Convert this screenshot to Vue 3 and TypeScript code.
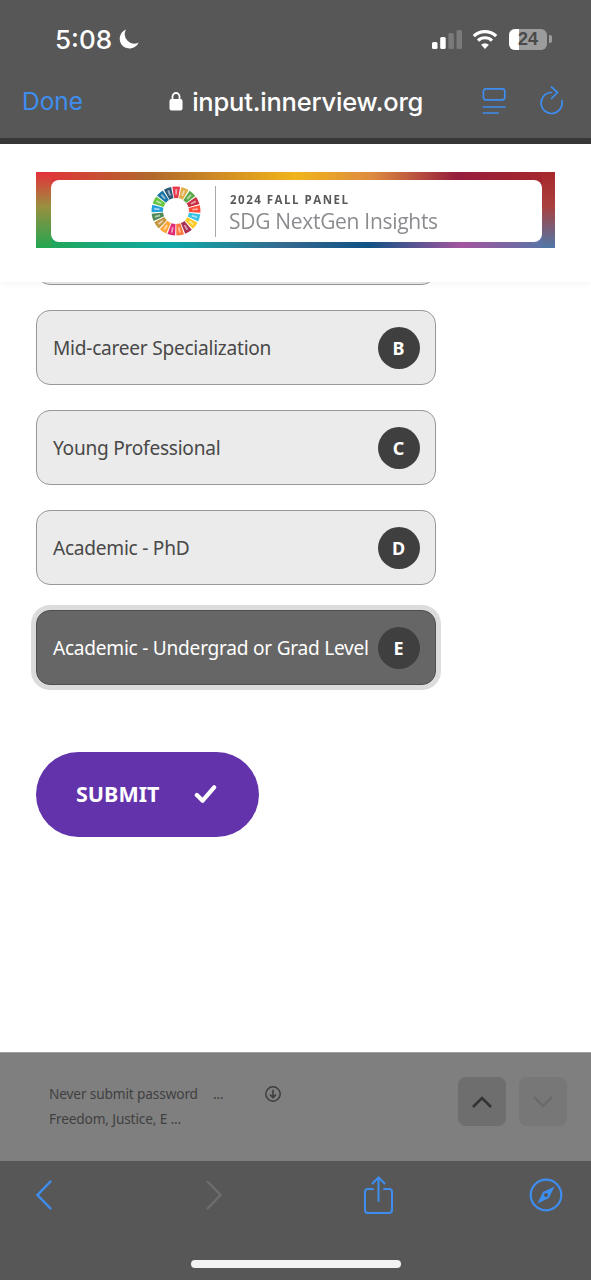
<script setup lang="ts">
const options = [
  { label: 'Mid-career Specialization', key: 'B', selected: false },
  { label: 'Young Professional', key: 'C', selected: false },
  { label: 'Academic - PhD', key: 'D', selected: false },
  { label: 'Academic - Undergrad or Grad Level', key: 'E', selected: true },
]
const sdgColors = ['#e5243b','#dda63a','#4c9f38','#c5192d','#ff3a21','#26bde2','#fcc30b','#a21942','#fd6925','#dd1367','#fd9d24','#bf8b2e','#3f7e44','#0a97d9','#56c02b','#00689d','#19486a']
const wedges = sdgColors.map((fill, i) => {
  const a0 = ((i * 360) / 17 - 10 - 90 + 1.5) * (Math.PI / 180)
  const a1 = (((i + 1) * 360) / 17 - 10 - 90 - 1.5) * (Math.PI / 180)
  const mid = (a0 + a1) / 2
  const pt = (r: number, a: number) => `${(25 + r * Math.cos(a)).toFixed(2)} ${(25 + r * Math.sin(a)).toFixed(2)}`
  const d = `M${pt(13, a0)} L${pt(24.5, a0)} A24.5 24.5 0 0 1 ${pt(24.5, a1)} L${pt(13, a1)} A13 13 0 0 0 ${pt(13, a0)}Z`
  const mark = `M${pt(16.5, mid)} L${pt(22, mid)}`
  return { fill, d, mark }
})
</script>

<template>
  <div class="phone">
    <header class="browser-top">
      <div class="status">
        <div class="status-left">
          <span class="time">5:08</span>
          <svg class="moon" viewBox="0 0 20 20"><path d="M7 .6A9.800 9.800 0 1 0 19.600 13.400 9.400 9.400 0 0 1 7 .6Z" fill="#fff"/></svg>
        </div>
        <div class="status-right">
          <svg class="signal" viewBox="0 0 30 19">
            <rect x="0" y="12" width="5.500" height="7" rx="1.500" fill="#fff"/>
            <rect x="8.200" y="7" width="5.500" height="12" rx="1.500" fill="#fff"/>
            <rect x="16.400" y="3" width="5.500" height="16" rx="1.500" fill="#7a7a7a"/>
            <rect x="24.500" y="0" width="5.500" height="19" rx="1.500" fill="#7a7a7a"/>
          </svg>
          <svg class="wifi" viewBox="0 0 26 20" fill="none" stroke="#fff" stroke-width="3.200">
            <path d="M1.800 7.200a16 16 0 0 1 22.400 0"/>
            <path d="M6 11.600a10 10 0 0 1 14 0"/>
            <path d="M13 20l-3.900-4.200a5.600 5.600 0 0 1 7.800 0Z" fill="#fff" stroke="none"/>
          </svg>
          <div class="battery"><span class="battery-fill"></span><span class="battery-num">24</span></div>
          <span class="battery-cap"></span>
        </div>
      </div>
      <div class="navbar">
        <span class="done">Done</span>
        <div class="address">
          <svg class="lock" viewBox="0 0 14 20"><path d="M3.500 9V5.500a3.500 3.500 0 0 1 7 0V9" fill="none" stroke="#fff" stroke-width="1.800"/><rect x="0.500" y="8" width="13" height="11.500" rx="2" fill="#fff"/></svg>
          <span class="url">input.innerview.org</span>
        </div>
        <div class="nav-icons">
          <svg class="reader" viewBox="0 0 24 28" fill="none" stroke="#3e8ef0" stroke-width="1.700">
            <rect x="1.400" y="1.800" width="21.400" height="11" rx="2.500"/>
            <path d="M.8 20h22.800M.8 26h16"/>
          </svg>
          <svg class="reload" viewBox="0 0 24 30" fill="none" stroke="#3e8ef0" stroke-width="1.700" stroke-linecap="round" stroke-linejoin="round">
            <path d="M11.500 6.500A10.500 10.500 0 1 0 21.800 14.500"/>
            <path d="M11.500 1l6 5.500-6 6"/>
          </svg>
        </div>
      </div>
    </header>
    <div class="edge"></div>

    <section class="page">
      <div class="brand">
        <div class="banner">
          <div class="banner-inner">
            <svg class="wheel" viewBox="0 0 50 50">
              <g v-for="w in wedges" :key="w.fill + w.d">
                <path :d="w.d" :fill="w.fill"/>
                <path :d="w.mark" stroke="#fff" stroke-opacity="0.55" stroke-width="1.800" fill="none"/>
              </g>
            </svg>
            <span class="divider"></span>
            <div class="brand-text">
              <span class="panel">2024 FALL PANEL</span>
              <span class="insights">SDG NextGen Insights</span>
            </div>
          </div>
        </div>
      </div>
      <main class="content">
        <div class="options">
          <div class="option sliver"></div>
          <div v-for="o in options" :key="o.key" class="option" :class="{ selected: o.selected }">
            <span class="option-label">{{ o.label }}</span>
            <span class="badge">{{ o.key }}</span>
          </div>
          <button class="submit" type="button">
            <span>SUBMIT</span>
            <svg class="check" viewBox="0 0 24 20" fill="none" stroke="#fff" stroke-width="4.400" stroke-linecap="round" stroke-linejoin="round"><path d="M3 11l6 6L21 3"/></svg>
          </button>
        </div>
      </main>
    </section>

    <section class="survey-bar">
      <div class="survey-text">
        <div class="line one">
          <span class="pw">Never submit password</span>
          <span class="dots">...</span>
          <svg class="down-circle" viewBox="0 0 18 18" fill="none" stroke="#3d3d3d" stroke-width="1.500"><circle cx="9" cy="9" r="7.200"/><path d="M9 4.800v7.600M6 9.600l3 3 3-3"/></svg>
        </div>
        <div class="line">Freedom, Justice, E ...</div>
      </div>
      <div class="arrows">
        <span class="arrow active"><svg viewBox="0 0 24 14" fill="none" stroke="#333" stroke-width="2.600"><path d="M3 12l9-9 9 9"/></svg></span>
        <span class="arrow"><svg viewBox="0 0 24 14" fill="none" stroke="#6b6b6b" stroke-width="2.600"><path d="M3 2l9 9 9-9"/></svg></span>
      </div>
    </section>

    <footer class="toolbar">
      <div class="tools">
        <svg class="chev" viewBox="0 0 16 30" fill="none" stroke="#3e8ef0" stroke-width="2.400" stroke-linecap="round"><path d="M14.500 1.500L1.500 15l13 13.500"/></svg>
        <svg class="chev forward" viewBox="0 0 16 30" fill="none" stroke="#6d6d6d" stroke-width="2.400" stroke-linecap="round"><path d="M1.500 1.500l13 13.500-13 13.500"/></svg>
        <svg class="share" viewBox="0 0 30 38" fill="none" stroke="#3e8ef0" stroke-width="2" stroke-linecap="round"><path d="M9 13H4a3 3 0 0 0-3 3v18a3 3 0 0 0 3 3h21a3 3 0 0 0 3-3V16a3 3 0 0 0-3-3h-5"/><path d="M14.500 25V2M8.500 7.500l6-6 6 6"/></svg>
        <svg class="compass" viewBox="0 0 34 34"><circle cx="17" cy="17" r="15.300" fill="none" stroke="#3e8ef0" stroke-width="2.200"/><path d="M25.500 8.500L20 20l-11.500 5.500L14 14Z" fill="#3e8ef0"/><circle cx="17" cy="17" r="2" fill="#575757"/></svg>
      </div>
      <div class="home-bar"></div>
    </footer>
  </div>
</template>

<style scoped>
.phone {
  width: 591px;
  height: 1280px;
  display: flex;
  flex-direction: column;
  background: #fff;
  overflow: hidden;
  font-family: "Inter", "Liberation Sans", sans-serif;
}
.browser-top {
  height: 138px;
  flex: none;
  background: #575757;
  padding: 0 22px;
  box-sizing: border-box;
}
.edge { height: 6px; flex: none; background: #383838; }
.status {
  height: 78px;
  display: flex;
  align-items: center;
  justify-content: space-between;
}
.status-left { display: flex; align-items: center; gap: 7px; margin-left: 33px; }
.time { color: #fff; font-size: 26px; font-weight: 500; letter-spacing: 0; }
.moon { width: 20px; height: 20px; }
.status-right { display: flex; align-items: center; margin-right: 17px; }
.signal { width: 30px; height: 19px; margin-right: 10px; }
.wifi { width: 26px; height: 20px; margin-right: 11px; }
.battery {
  position: relative;
  width: 38px;
  height: 21px;
  border-radius: 6px;
  background: #9c9c9c;
  overflow: hidden;
  display: flex;
  align-items: center;
  justify-content: center;
}
.battery-fill { position: absolute; left: 0; top: 0; bottom: 0; width: 10px; background: #fff; }
.battery-num { position: relative; color: #4a4a4a; font-size: 18px; font-weight: 700; font-family: "Liberation Sans", sans-serif; }
.battery-cap { width: 3px; height: 8px; margin-left: 2px; background: #9c9c9c; border-radius: 0 2px 2px 0; }
.navbar { height: 46px; display: flex; align-items: center; position: relative; justify-content: space-between; }
.done { color: #3e8ef0; font-size: 24.500px; }
.address { display: flex; align-items: center; gap: 9px; margin-left: 86px; }
.lock { width: 14px; height: 20px; }
.url { color: #fff; font-size: 25.500px; font-weight: 500; letter-spacing: -0.2px; }
.nav-icons { display: flex; align-items: center; gap: 34px; margin-left: auto; margin-right: 5px; }
.reader { width: 24px; height: 28px; }
.reload { width: 24px; height: 30px; }

.page { flex: 1; display: flex; flex-direction: column; min-height: 0; }
.brand {
  height: 138px;
  flex: none;
  box-sizing: border-box;
  padding: 28px 36px 0;
  background: #fff;
  position: relative;
  z-index: 2;
  box-shadow: 0 1px 6px rgba(0, 0, 0, 0.06);
}
.banner {
  height: 76px;
  box-sizing: border-box;
  padding: 8px 13px 6px 15px;
  background:
    linear-gradient(to bottom, #e6303a, #9a8f3f 45%, #22a650) left top / 15px 100% no-repeat,
    linear-gradient(to bottom, #a8282c, #a9403f 45%, #4f78a8) right top / 13px 100% no-repeat,
    linear-gradient(to right, #e6303a, #b0682c 22%, #f0b41a 50%, #dd8a40 65%, #961d3c 81%, #a8282c) top / 100% 50% no-repeat,
    linear-gradient(to right, #22a650, #10a8a6 26%, #34688f 48%, #0f5285 64%, #a4559e 82%, #4f78a8) bottom / 100% 50% no-repeat;
}
.banner-inner {
  height: 100%;
  background: #fff;
  border-radius: 8px;
  display: flex;
  align-items: center;
  padding-left: 100px;
  box-sizing: border-box;
}
.wheel { width: 50px; height: 50px; flex: none; filter: blur(0.5px); opacity: 0.9; }
.divider { width: 1px; height: 51px; background: #a8a8a8; margin-left: 14px; margin-right: 13px; flex: none; }
.brand-text { display: flex; flex-direction: column; font-family: "Open Sans", sans-serif; padding-top: 5px; filter: blur(0.3px); }
.panel { color: #58595b; font-size: 11.500px; font-weight: 700; letter-spacing: 1.5px; line-height: 15px; margin-left: 1px; }
.insights { color: #8a8c8f; font-size: 21px; line-height: 28px; letter-spacing: -0.3px; }

.content { flex: 1; min-height: 0; overflow: hidden; background: #fff; }
.options {
  margin-top: -72px;
  padding-left: 36px;
  display: flex;
  flex-direction: column;
  align-items: flex-start;
  gap: 25px;
  font-family: "Noto Sans", sans-serif;
}
.option {
  width: 400px;
  height: 75px;
  flex: none;
  box-sizing: border-box;
  padding: 0 15.500px 0 16px;
  display: flex;
  align-items: center;
  justify-content: space-between;
  background: #ebebeb;
  border: 1.500px solid #989898;
  border-radius: 14px;
  color: #484848;
}
.option-label { font-size: 19.100px; white-space: nowrap; letter-spacing: -0.25px; }
.badge {
  width: 42px;
  height: 42px;
  flex: none;
  border-radius: 50%;
  background: #3f3f3f;
  color: #fff;
  font-weight: 700;
  font-size: 18px;
  display: flex;
  align-items: center;
  justify-content: center;
}
.selected {
  background: #666;
  border-color: #4f4f4f;
  color: #fff;
  box-shadow: 0 0 0 5px #dcdcdc;
}
.submit {
  margin-top: 42px;
  width: 223px;
  height: 85px;
  border: none;
  border-radius: 43px;
  background: #6233ab;
  color: #fff;
  font-family: inherit;
  font-weight: 700;
  font-size: 21.500px;
  display: flex;
  align-items: center;
  padding: 0 0 2px 40px;
  gap: 35px;
}
.check { width: 23px; height: 20px; margin-top: 1px; }

.survey-bar {
  height: 109px;
  flex: none;
  background: #7f7f7f;
  border-top: 1px solid #a0a0a0;
  box-sizing: border-box;
  padding: 0 24px 0 49px;
  display: flex;
  justify-content: space-between;
  position: relative;
  font-family: "Noto Sans", sans-serif;
}
.survey-text { padding-top: 28px; color: #3f3f3f; font-size: 13.700px; line-height: 25px; letter-spacing: -0.15px; }
.line.one { display: flex; align-items: center; }
.dots { margin-left: 15px; }
.down-circle { width: 18px; height: 18px; margin-left: 41px; }
.arrows { display: flex; gap: 13px; padding-top: 24px; }
.arrow {
  width: 48px;
  height: 49px;
  border-radius: 8px;
  background: #777;
  display: flex;
  align-items: center;
  justify-content: center;
}
.arrow.active { background: #6e6e6e; }
.arrow svg { width: 24px; height: 14px; }

.toolbar {
  height: 119px;
  flex: none;
  background: #575757;
  display: flex;
  flex-direction: column;
  align-items: center;
}
.tools {
  width: 100%;
  height: 68px;
  margin-bottom: 31px;
  box-sizing: border-box;
  padding-left: 36px;
  display: flex;
  align-items: center;
  flex: none;
}
.chev { width: 16px; height: 30px; }
.forward { margin-left: 154px; }
.share { width: 30px; height: 38px; margin-left: 142px; }
.compass { width: 34px; height: 34px; margin-left: 135px; }
.home-bar { width: 210px; height: 8px; flex: none; border-radius: 4px; background: #f2f2f2; }
</style>

<style>
html, body { margin: 0; background: #fff; }
</style>
